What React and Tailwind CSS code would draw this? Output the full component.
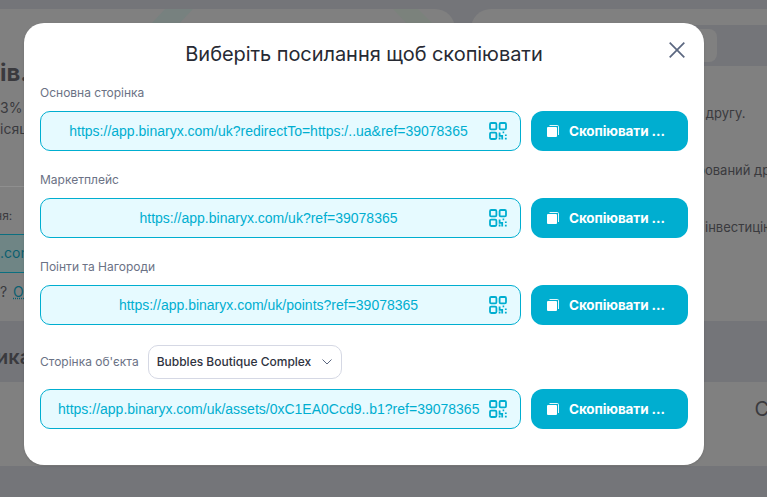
const ui = { fontFamily: '"Inter", "Noto Sans", sans-serif' }
const mono = { fontFamily: '"Liberation Sans", Arial, sans-serif' }

function QrIcon() {
  return (
    <svg width="18" height="18" viewBox="0 0 18 18" fill="none" stroke="#00aed0" strokeWidth="1.8">
      <rect x="1" y="1" width="6.4" height="6.4" rx="1.2" />
      <rect x="10.6" y="1" width="6.4" height="6.4" rx="1.2" />
      <rect x="1" y="10.6" width="6.4" height="6.4" rx="1.2" />
      <path d="M10.6 10.4v3.4h2.6v3.6M10.6 15.6v1.8M13.6 10.4h1.6M16.8 12.6v1.4M16.8 15.8v1.6" />
    </svg>
  )
}

function CopyIcon() {
  return (
    <svg width="12" height="12" viewBox="0 0 12 12" fill="none">
      <rect x="0" y="2" width="10" height="10" rx="1" fill="#fff" />
      <path d="M2.5 0.5H10.5a1 1 0 0 1 1 1V10" stroke="#fff" strokeWidth="0.9" />
    </svg>
  )
}

function LinkRow({ url }) {
  return (
    <div className="flex gap-[10px]">
      <div className="w-[481px] h-10 flex items-center rounded-[10px] border border-[#00aed0] bg-[#e6faff] pr-[13px]">
        <span className="flex-1 text-center text-sm text-[#00aed0] whitespace-nowrap pl-[17px]" style={mono}>{url}</span>
        <span className="ml-[10px] shrink-0"><QrIcon /></span>
      </div>
      <button className="w-[157px] h-10 flex items-center rounded-xl bg-[#00aed0] pl-4 gap-[10px] text-[13.5px] font-bold text-white">
        <CopyIcon />
        <span className="whitespace-nowrap tracking-[-0.1px]">Скопіювати ...</span>
      </button>
    </div>
  )
}

function Label({ children }) {
  return <p className="text-xs leading-4 text-[#6b7285] h-4 whitespace-nowrap">{children}</p>
}

export default function App() {
  return (
    <div className="relative w-[767px] h-[497px] overflow-hidden bg-[#747579]" style={ui}>
      {/* dimmed page underneath */}
      <div className="flex gap-4 pt-[9px] h-[321px]">
        <div className="relative w-[455px] shrink-0 rounded-tr-[20px] rounded-br-[20px] bg-[#808080] text-[#3a3a3e] text-sm overflow-hidden">
          <svg className="absolute top-0 left-0" width="455" height="16" viewBox="0 0 455 16">
            <path d="M165 0H193L178 16H150Z" fill="#77817f" />
            <path d="M393 0H418L434 16H408Z" fill="#7b827c" />
          </svg>
          <p className="mt-[50px] text-2xl font-bold leading-7">ів.</p>
          <p className="mt-[10px] leading-[21px]">3%</p>
          <p className="leading-[21px]">ісяц</p>
          <div className="mt-[47px] border-t border-[#8f8f8f]" />
          <p className="mt-[21px] text-xs leading-4 -ml-3">ння:</p>
          <div className="mt-[10px] h-[39px] border-y border-[#0b6f80] bg-[#6f8585] pt-2 text-[#0b5f70] leading-5">.com</div>
          <p className="mt-[9px] leading-5">? <span className="ml-0.5 text-[#0b5f70] underline decoration-dotted">Ох</span></p>
        </div>
        <div className="flex-1 rounded-tl-[20px] bg-[#808080] rounded-bl-[20px] overflow-hidden text-[13px] text-[#3a3a3e]">
          <div className="mt-4 h-[41px] bg-[#747579] p-1 pr-[50px]">
            <div className="h-full rounded-lg bg-[#808080]" />
          </div>
          <p className="mt-[37px] pl-[224px] leading-5 whitespace-nowrap">я другу.</p>
          <p className="mt-[37px] pl-[226px] leading-5 whitespace-nowrap">рований дру</p>
          <p className="mt-[37px] pl-[234px] leading-5 whitespace-nowrap">інвестицію</p>
        </div>
      </div>
      <div className="h-[61px] pt-[22px] -ml-1 text-xl font-semibold leading-7 text-[#3a3a3e]">ика</div>
      <div className="h-[84px] bg-[#808080] flex justify-end items-start pt-[13px] -mr-0.5 text-xl text-[#3a3a3e]">
        <span>С</span>
      </div>

      {/* dialog */}
      <div className="absolute inset-0 flex items-start pl-6 pt-[23px]">
        <div className="relative w-[680px] h-[442px] rounded-[20px] bg-white px-4 pt-[17px] shadow-sm">
          <h2 className="text-center text-xl leading-7 tracking-[-0.06px] text-[#272a33]">Виберіть посилання щоб скопіювати</h2>
          <button className="absolute top-[19px] right-[19px] text-[#5b6780]">
            <svg width="16" height="16" viewBox="0 0 16 16" fill="none" stroke="currentColor" strokeWidth="1.7">
              <path d="M0.7 0.7L15.3 15.3M15.3 0.7L0.7 15.3" />
            </svg>
          </button>

          <div className="mt-[17px] flex flex-col">
            <Label>Основна сторінка</Label>
            <div className="mt-[10px]"><LinkRow url="https://app.binaryx.com/uk?redirectTo=https:/..ua&ref=39078365" /></div>
            <div className="mt-[21px]"><Label>Маркетплейс</Label></div>
            <div className="mt-[10px]"><LinkRow url="https://app.binaryx.com/uk?ref=39078365" /></div>
            <div className="mt-[21px]"><Label>Поінти та Нагороди</Label></div>
            <div className="mt-[10px]"><LinkRow url="https://app.binaryx.com/uk/points?ref=39078365" /></div>
            <div className="mt-5 flex items-center gap-[9px] h-[34px]">
              <Label>Сторінка об'єкта</Label>
              <div className="w-[194px] h-[34px] flex items-center justify-between rounded-[10px] border border-[#d5d8e4] pl-2 pr-[9px] text-xs font-medium text-[#2f3340]">
                <span className="whitespace-nowrap">Bubbles Boutique Complex</span>
                <svg width="10" height="6" viewBox="0 0 10 6" fill="none" stroke="#5b6780" strokeWidth="1">
                  <path d="M0.5 0.5L5 5L9.5 0.5" />
                </svg>
              </div>
            </div>
            <div className="mt-[10px]"><LinkRow url="https://app.binaryx.com/uk/assets/0xC1EA0Ccd9..b1?ref=39078365" /></div>
          </div>
        </div>
      </div>
    </div>
  )
}
